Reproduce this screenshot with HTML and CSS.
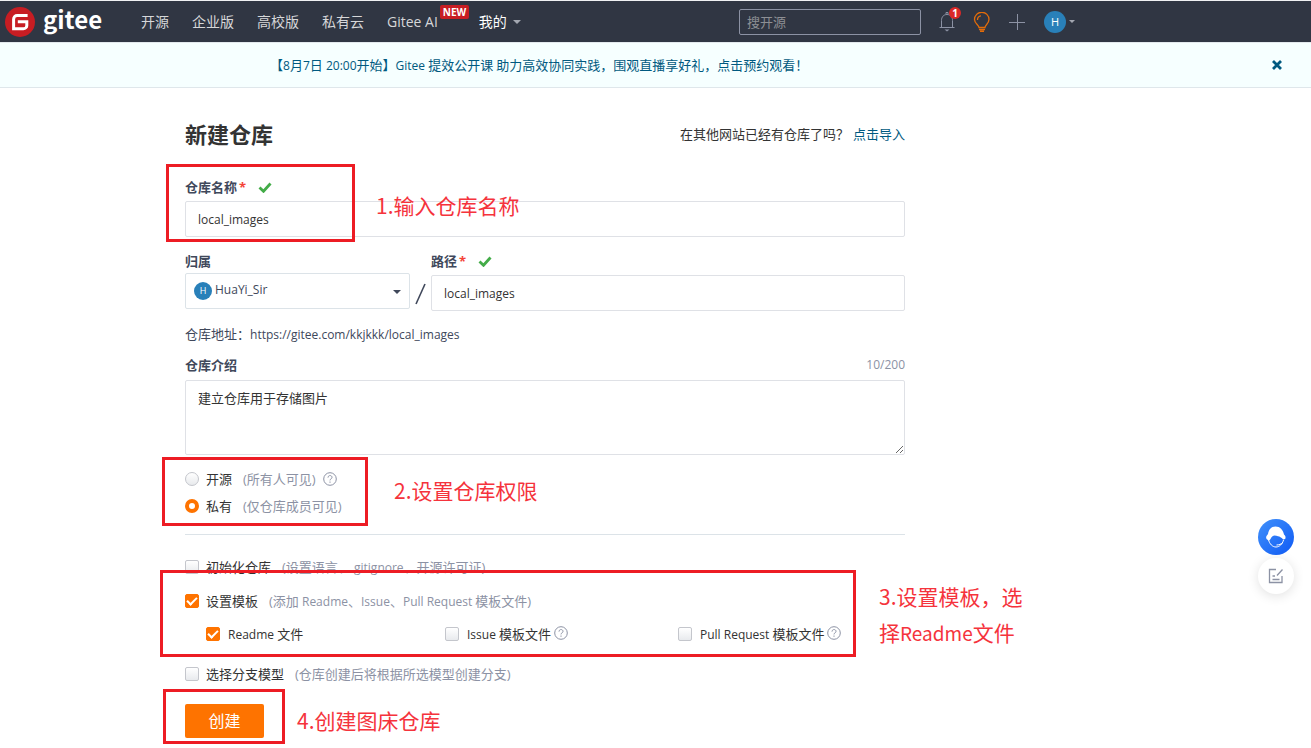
FILE: index.html
```html
<!DOCTYPE html>
<html lang="zh-CN">
<head>
<meta charset="utf-8">
<title>新建仓库 - Gitee</title>
<link rel="stylesheet" href="styles.css">
</head>
<body>
<header class="topbar">
  <a class="brand" href="#">
    <svg class="brand-mark" viewBox="0 0 30 30" aria-hidden="true"><circle cx="15" cy="15" r="15" fill="#c71d23"/><path d="M22.600 8.600H12.200a3.600 3.600 0 0 0-3.600 3.600v9.600h9.800a3.400 3.400 0 0 0 3.400-3.400v-3.600h-9" fill="none" stroke="#fff" stroke-width="3"/></svg>
    <span class="brand-name">gitee</span>
  </a>
  <nav class="nav">
    <a href="#">开源</a>
    <a href="#">企业版</a>
    <a href="#">高校版</a>
    <a href="#">私有云</a>
    <a href="#" class="nav-ai">Gitee AI<span class="new-badge">NEW</span></a>
    <a href="#" class="nav-mine">我的<span class="caret"></span></a>
  </nav>
  <div class="tools">
    <input class="search" type="text" placeholder="搜开源" aria-label="搜开源">
    <button class="tool bell" aria-label="通知">
      <svg width="16" height="20" viewBox="0 0 16 20" fill="none" stroke="#8c92a4"><path d="M.5 15.5h15M2.500 15.500V8.500C2.500 5 4.500 2.500 8 2.500s5.500 2.500 5.500 6v7M7 2V.5h2V2"/><path d="M5.500 17.500h5L8 19.500z" fill="#8c92a4" stroke="none"/></svg>
      <span class="count">1</span>
    </button>
    <button class="tool bulb" aria-label="建议">
      <svg width="18" height="20" viewBox="0 0 18 20" fill="none" stroke="#e36c09" stroke-width="1.300"><path d="M6 15.500c0-2.500-4.500-4-4.500-8a7.200 7.200 0 0 1 14.500 0c0 4-4 5.500-4 8zM4.500 8c0-2.300 1.300-4 3.500-4.200"/><path d="M6 17.500h6M7 19.300h4" stroke-width="1.600"/></svg>
    </button>
    <button class="tool plus" aria-label="新建">
      <svg width="16" height="16" viewBox="0 0 16 16" stroke="#8c92a4"><path d="M8.500 0v16M0 8.500h16"/></svg>
    </button>
    <button class="tool user" aria-label="用户菜单"><span class="avatar avatar-lg">H</span><span class="caret caret-sm"></span></button>
  </div>
</header>

<div class="notice">
  <a href="#">【<span class="latin">8</span>月<span class="latin">7</span>日<span class="latin"> 20:00</span>开始】<span class="latin">Gitee </span>提效公开课<span class="latin"> </span>助力高效协同实践，围观直播享好礼，点击预约观看！</a>
  <button class="notice-close" aria-label="关闭"><svg width="10" height="10" viewBox="0 0 10 10" stroke="#005980" stroke-width="2.800"><path d="M1 1l8 8M9 1L1 9"/></svg></button>
</div>

<main class="page">
  <div class="heading">
    <h1>新建仓库</h1>
    <p>在其他网站已经有仓库了吗？<a href="#">点击导入</a></p>
  </div>

  <form class="form">
    <div class="group field name-group">
      <div class="label-row"><label for="name">仓库名称</label><span class="req">*</span><svg class="tick" viewBox="0 0 14 11"><path d="M1.500 5.500l4 3.800L12.500 1.500" fill="none" stroke="#43ac48" stroke-width="2.800"/></svg></div>
      <input id="name" class="text" type="text" value="local_images">
      <span class="mark mark-name"></span><span class="note note-name">1.输入仓库名称</span>
    </div>

    <div class="path-row">
      <div class="owner">
        <label for="owner">归属</label>
        <div class="owner-box">
          <select id="owner"><option>HuaYi_Sir</option></select>
          <span class="avatar avatar-sm">H</span>
          <span class="caret caret-dark"></span>
        </div>
      </div>
      <svg class="slash" width="11" height="22" viewBox="0 0 11 22"><path d="M10 1L1 21" stroke="#40485b" stroke-width="1.600"/></svg>
      <div class="field path-field">
        <div class="label-row"><label for="path">路径</label><span class="req">*</span><svg class="tick" viewBox="0 0 14 11"><path d="M1.500 5.500l4 3.800L12.500 1.500" fill="none" stroke="#43ac48" stroke-width="2.800"/></svg></div>
        <input id="path" class="text" type="text" value="local_images">
      </div>
    </div>

    <p class="address">仓库地址：<span class="latin">https://gitee.com/kkjkkk/local_images</span></p>

    <div class="desc">
      <div class="desc-head"><label for="desc">仓库介绍</label><span class="hint latin">10/200</span></div>
      <textarea id="desc">建立仓库用于存储图片</textarea>
    </div>

    <div class="group access">
      <label class="option"><input type="radio" name="access"><span>开源</span><span class="hint">(所有人可见)</span><svg class="help" viewBox="0 0 14 14"><circle cx="7" cy="7" r="6.300"/><path d="M5 5.600c0-2.700 4-2.700 4-.2 0 1.500-2 1.400-2 3M7 9.500v1.300"/></svg></label>
      <label class="option"><input type="radio" name="access" checked><span>私有</span><span class="hint">(仅仓库成员可见)</span></label>
      <span class="mark mark-access"></span><span class="note note-access">2.设置仓库权限</span>
    </div>

    <hr>

    <label class="option init"><input type="checkbox"><span>初始化仓库</span><span class="hint">(设置语言、<span class="latin">.gitignore</span>、开源许可证)</span></label>

    <div class="group template">
      <label class="option"><input type="checkbox" checked><span>设置模板</span><span class="hint">(添加<span class="latin"> Readme</span>、<span class="latin">Issue</span>、<span class="latin">Pull Request </span>模板文件)</span></label>
      <div class="files">
        <label class="option"><input type="checkbox" checked><span><span class="latin">Readme </span>文件</span></label>
        <label class="option"><input type="checkbox"><span><span class="latin">Issue </span>模板文件</span><svg class="help near" viewBox="0 0 14 14"><circle cx="7" cy="7" r="6.300"/><path d="M5 5.600c0-2.700 4-2.700 4-.2 0 1.500-2 1.400-2 3M7 9.500v1.300"/></svg></label>
        <label class="option"><input type="checkbox"><span><span class="latin">Pull Request </span>模板文件</span><svg class="help near" viewBox="0 0 14 14"><circle cx="7" cy="7" r="6.300"/><path d="M5 5.600c0-2.700 4-2.700 4-.2 0 1.500-2 1.400-2 3M7 9.500v1.300"/></svg></label>
      </div>
      <span class="mark mark-template"></span><span class="note note-template">3.设置模板，选<br>择<span class="note-latin">Readme</span>文件</span>
    </div>

    <label class="option branch"><input type="checkbox"><span>选择分支模型</span><span class="hint">(仓库创建后将根据所选模型创建分支)</span></label>

    <div class="group submit">
      <button class="create" type="button">创建</button>
      <span class="mark mark-create"></span><span class="note note-create">4.创建图床仓库</span>
    </div>
  </form>
</main>

<aside class="floating">
  <button class="fab fab-help" aria-label="客服"><svg width="36" height="36" viewBox="0 0 36 36"><defs><linearGradient id="g" x1="0" y1="0" x2="1" y2="1"><stop offset="0" stop-color="#4191fa"/><stop offset="1" stop-color="#0f5af5"/></linearGradient></defs><circle cx="18" cy="18" r="18" fill="url(#g)"/><path d="M8.500 20c-1-2 .2-3.500 1.500-5C10.500 11 13 7.500 17.500 7.500S25 11 26 15.500c1.500 1 2 3 1.200 4.500l-2 .5c-1.200-1.500-3.200-3.500-8.700-4-1.500 0-2.500 1-3.500 2.500-.5 1.500-1.500 2.500-2.500 2.500z" fill="#fff"/><path d="M10.500 20.500c1 4.500 4 7.500 7.500 7.500s6.500-3 7.500-7M18.500 26c2.500 0 4.500-.7 6.500-2.700" fill="none" stroke="#fff" stroke-width="1"/></svg></button>
  <button class="fab fab-edit" aria-label="反馈"><svg width="16" height="16" viewBox="0 0 16 16" fill="none" stroke="#8c92a4" stroke-width="1.300"><path d="M8 1.500H1.500v13h12.500V8M9 7.500l5.500-6M4.500 8h2.500M4.500 11.500h7"/></svg></button>
</aside>
</body>
</html>
```

FILE: styles.css
```css
*, *::after { box-sizing: border-box; }

body {
  margin: 0;
  background: #fff;
  color: #40485b;
  font: 13px/20px "Open Sans", "Noto Sans CJK SC", sans-serif;
}

h1, p { margin: 0; }
a { color: #005980; text-decoration: none; }
button { border: 0; padding: 0; background: none; font: inherit; cursor: pointer; }
input, select, textarea { font: inherit; margin: 0; }
svg { display: block; flex: none; }
.latin { font-size: 12px; }

/* Top bar */
.topbar {
  display: flex;
  align-items: center;
  height: 43px;
  padding: 0 236px 0 5px;
  background: #303643;
  border-top: 1px solid #f0f1f3;
  border-bottom: 1px solid #e3e9ed;
}
.brand { display: flex; align-items: center; gap: 8px; width: 136px; color: #fff; }
.brand-mark { width: 30px; height: 30px; }
.brand-name { padding-bottom: 5px; font: 700 24px/30px "Noto Sans CJK SC", sans-serif; }
.nav { display: flex; gap: 23px; font-size: 14px; white-space: nowrap; }
.nav a { color: #d6d7d9; }
.nav-ai { position: relative; margin-right: 18px; }
.nav .nav-mine { display: flex; align-items: center; gap: 6px; color: #fff; }
.new-badge {
  position: absolute;
  left: 100%;
  top: -7px;
  margin-left: 2px;
  padding: 0 3px;
  border-radius: 2px;
  background: #c71d23;
  color: #fff;
  font-size: 10px;
  font-weight: 700;
  line-height: 14px;
}
.caret { border: 4px solid transparent; border-top-color: #a3a7b1; border-bottom: 0; }
.tools { display: flex; align-items: center; margin-left: auto; }
.search {
  width: 182px;
  height: 26px;
  padding: 0 7px;
  border: 1px solid #8c92a4;
  border-radius: 2px;
  background: transparent;
  color: #fff;
}
.search::placeholder { color: #8d8f94; opacity: 1; }
.tool { display: flex; align-items: center; }
.bell { position: relative; margin-left: 18px; }
.count {
  position: absolute;
  top: -5px;
  right: -6px;
  width: 12px;
  height: 12px;
  border-radius: 50%;
  background: #db2828;
  color: #fff;
  font-size: 10px;
  font-weight: 700;
  line-height: 12px;
  text-align: center;
}
.bulb { margin-left: 18px; }
.plus { margin-left: 18px; }
.user { gap: 3px; margin-left: 19px; }
.avatar { border-radius: 50%; background: #2980b9; color: #fff; text-align: center; }
.avatar-lg { width: 22px; height: 22px; font-size: 11px; line-height: 22px; }
.avatar-sm { width: 18px; height: 18px; font-size: 9px; line-height: 18px; }
.caret-sm { border-width: 3px 3px 0; }

/* Notice */
.notice {
  display: flex;
  align-items: center;
  justify-content: space-between;
  height: 45px;
  padding: 0 29px 0 270px;
  background: #f6ffff;
  border-bottom: 1px solid #dfe7eb;
}

/* Page */
.page { max-width: 905px; padding: 28px 0 8px 185px; }
.heading { display: flex; align-items: center; justify-content: space-between; height: 36px; }
.heading h1 { color: #333; font-size: 22px; line-height: 36px; }
.heading p { color: #333; }
.heading a { margin-left: 4px; }
.group { position: relative; }
.field { display: flex; flex-direction: column; gap: 4px; }
.label-row { display: flex; align-items: center; height: 20px; }
.label-row label, .owner label, .desc-head label { font-weight: 700; }
.req { margin-left: 2px; color: #f44336; font-weight: 700; }
.tick { width: 14px; height: 11px; margin-left: 12px; }
.text {
  width: 100%;
  height: 36px;
  padding: 0 12px;
  border: 1px solid #dfe1e6;
  border-radius: 2px;
  background: #fff;
  color: #333;
  font-size: 12px;
}
.name-group { margin-top: 25px; }

.path-row { display: flex; align-items: flex-start; margin-top: 14px; }
.owner { display: flex; flex-direction: column; gap: 2px; width: 225px; }
.owner-box { position: relative; }
.owner-box select {
  display: block;
  width: 100%;
  height: 36px;
  padding: 0 24px 3px 29px;
  border: 1px solid #dce3e8;
  border-radius: 2px;
  background: #fff;
  color: #40485b;
  font-size: 12px;
  appearance: none;
}
.owner-box .avatar { position: absolute; left: 9px; top: 9px; pointer-events: none; }
.caret-dark { position: absolute; right: 9px; top: 17px; border-top-color: #40485b; pointer-events: none; }
.slash { margin: 32px 5px 0; }
.path-field { flex: 1; }

.address { margin-top: 13px; }
.desc { margin-top: 10px; }
.desc-head { display: flex; justify-content: space-between; margin-bottom: 5px; }
.hint { color: #8c92a4; }
textarea {
  display: block;
  width: 100%;
  height: 75px;
  padding: 7px 12px;
  border: 1px solid #dfe1e6;
  border-radius: 2px;
  color: #333;
  resize: vertical;
}

/* Options */
.option { display: flex; align-items: center; height: 20px; color: #333; white-space: nowrap; }
.option .hint { margin-left: 11px; }
.option input {
  appearance: none;
  flex: none;
  width: 14px;
  height: 14px;
  margin-right: 7px;
  border: 1px solid #c4c6cc;
  border-radius: 2px;
  background: linear-gradient(#fff, #e8eaed);
}
.option input[type="radio"] { border-radius: 50%; }
.option input[type="radio"]:checked { border: 4px solid #fe7300; background: #fff; }
.option input[type="checkbox"]:checked {
  display: grid;
  place-items: center;
  border-color: #fe7300;
  background: #fe7300;
}
.option input[type="checkbox"]:checked::after {
  content: "";
  width: 10px;
  height: 6px;
  margin-bottom: 3px;
  border: solid #fff;
  border-width: 0 0 2px 2px;
  transform: rotate(-45deg);
}
.help { width: 14px; height: 14px; margin-left: 7px; fill: none; stroke: #8c92a4; stroke-width: 1; }
.near { margin: 0 0 3px 3px; }
.access { margin-top: 10px; }
.access .option { height: 27px; }
hr { height: 1px; margin: 15px 0 0; border: 0; background: #dce3e8; }
.init { margin-top: 22px; }
.template { margin-top: 14px; }
.files { display: grid; grid-template-columns: 239fr 233fr 227fr; margin-top: 13px; padding-left: 21px; }
.files input { margin-right: 8px; }
.branch { margin-top: 20px; }
.submit { margin-top: 20px; }
.create {
  display: block;
  width: 79px;
  height: 34px;
  border-radius: 2px;
  background: #fe7300;
  color: #fff;
  font-size: 16px;
}

/* Tutorial marks laid over the form */
.mark { position: absolute; border: 3px solid #ed1c24; pointer-events: none; }
.note { position: absolute; color: #f5333c; font: 21px/36px "Noto Sans CJK SC", sans-serif; white-space: nowrap; }
.note-latin { font-size: 19px; }
.mark-name { left: -19px; top: -13px; width: 189px; height: 78px; }
.note-name { left: 191px; top: 10px; }
.mark-access { left: -23px; top: -8px; width: 206px; height: 69px; }
.note-access { left: 209px; top: 7px; }
.mark-template { left: -25px; top: -21px; width: 696px; height: 87px; }
.note-template { left: 694px; top: -13px; }
.mark-create { left: -22px; top: -15px; width: 122px; height: 55px; }
.note-create { left: 112px; top: -2px; }

/* Floating actions */
.floating { position: fixed; right: 17px; bottom: 154px; display: flex; flex-direction: column; gap: 3px; }
.fab { display: grid; place-items: center; width: 36px; height: 36px; border-radius: 50%; }
.fab-edit { background: #fff; box-shadow: 0 2px 12px rgba(0, 0, 0, 0.12); }
```
